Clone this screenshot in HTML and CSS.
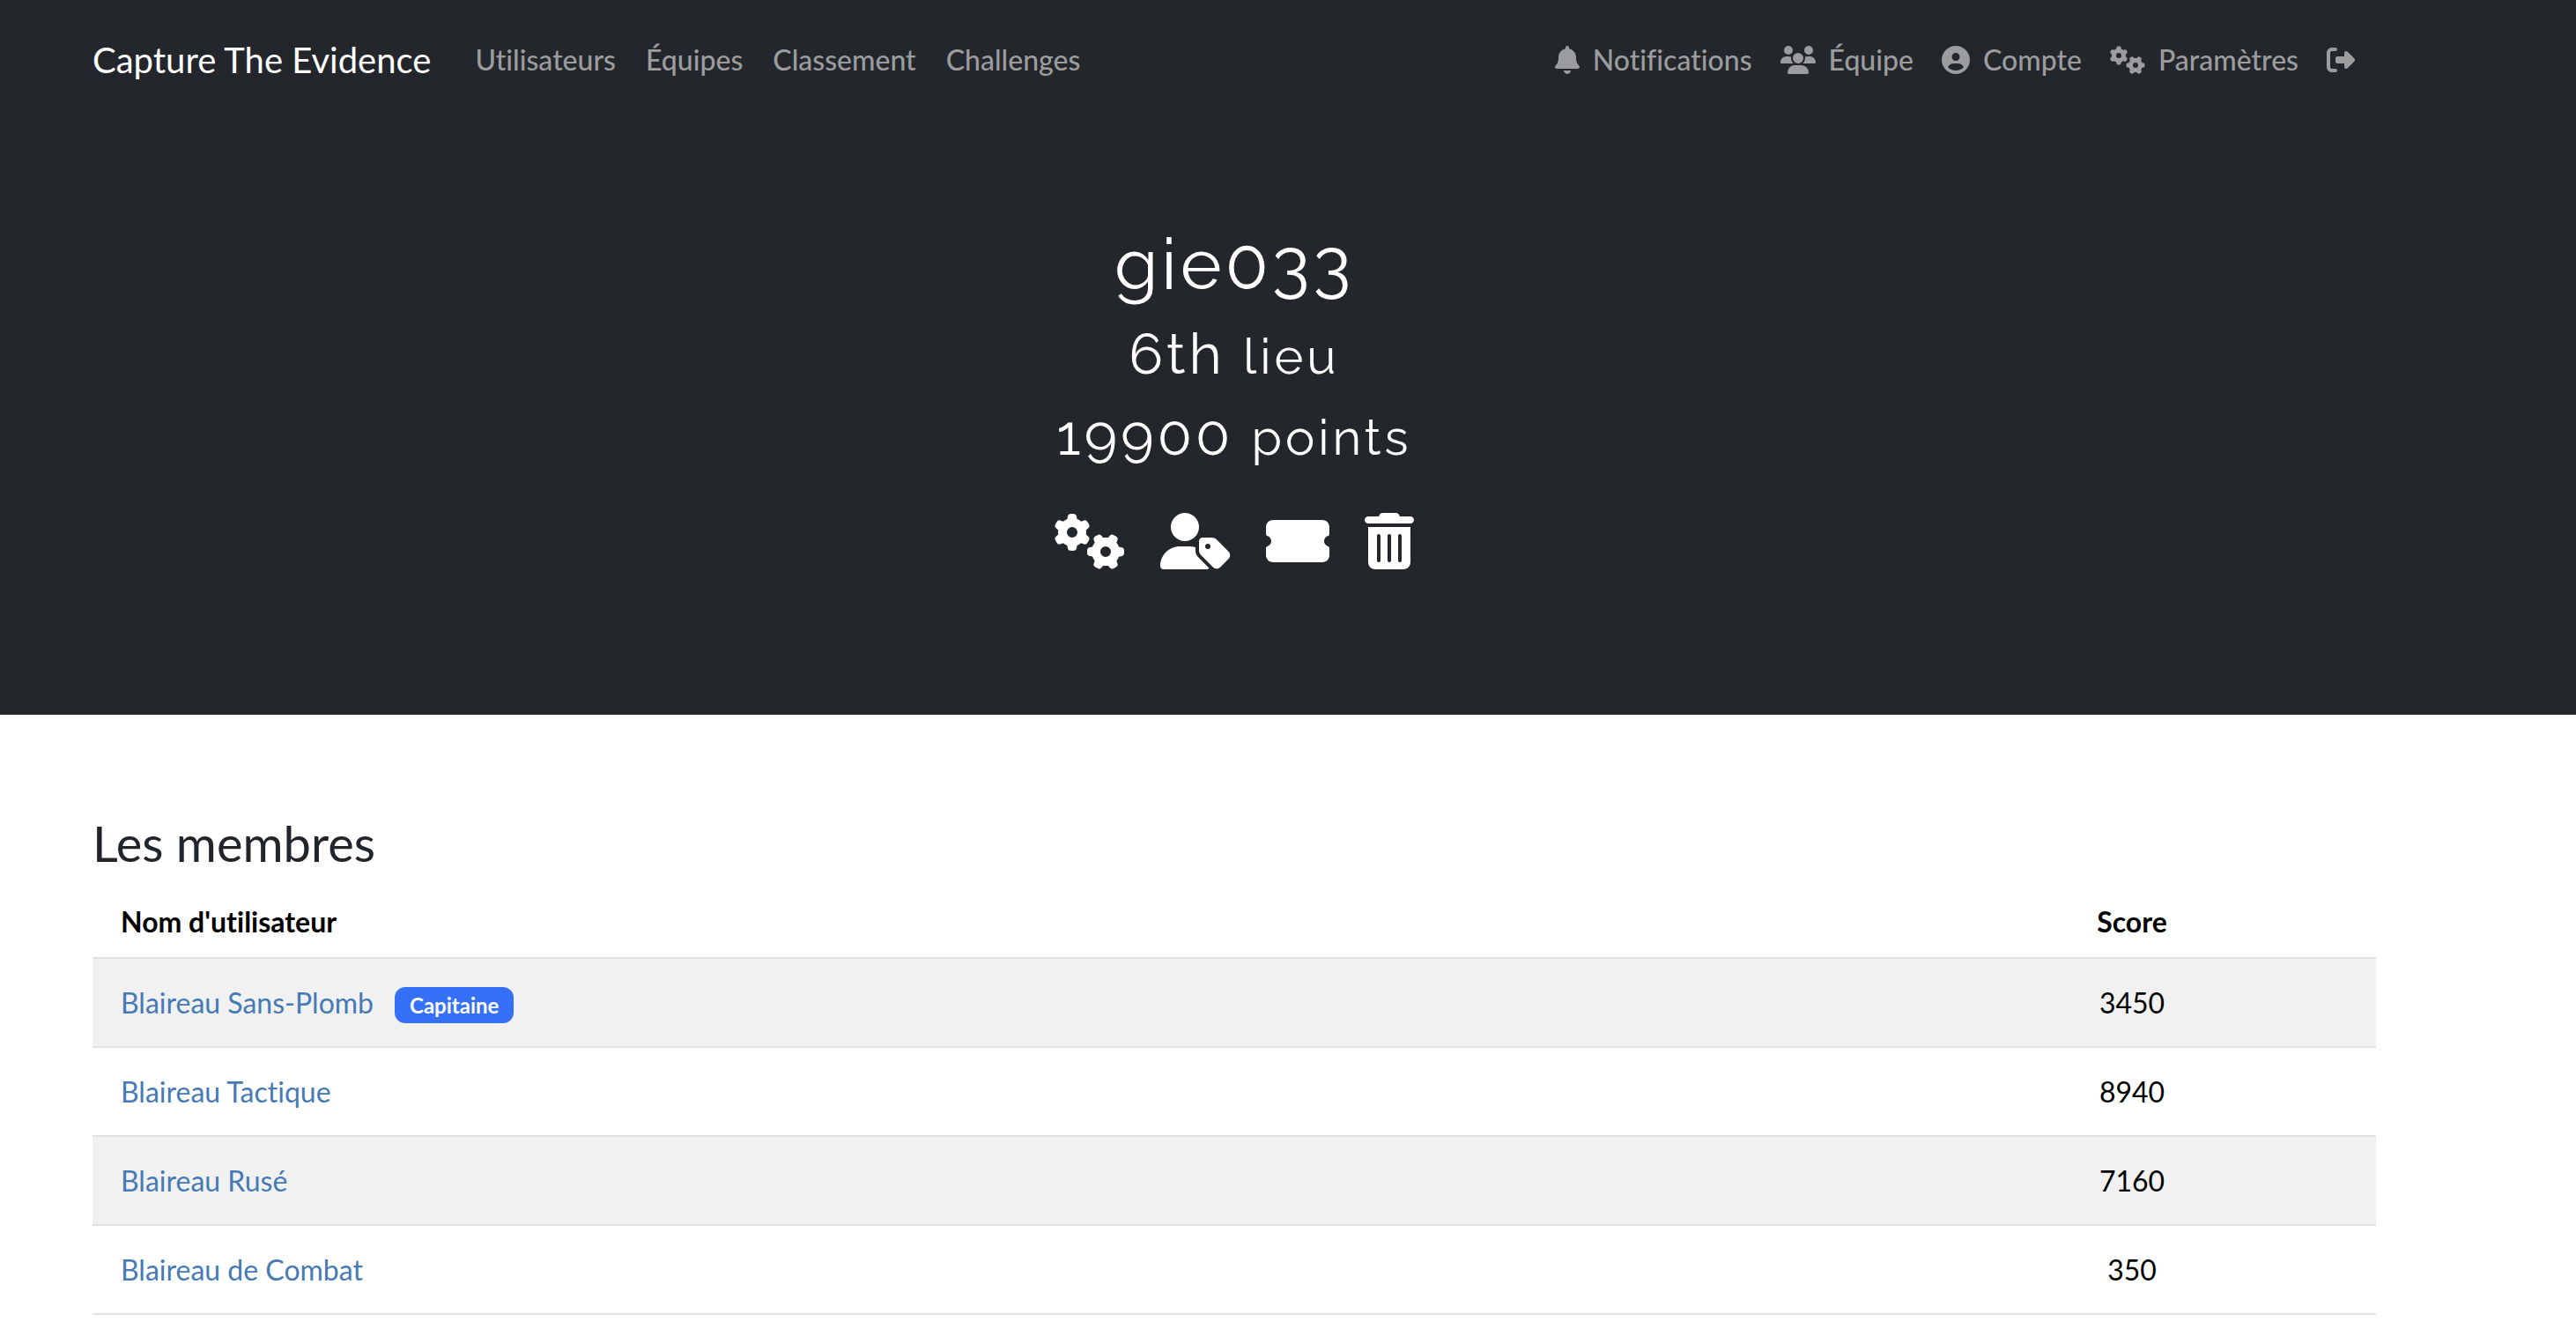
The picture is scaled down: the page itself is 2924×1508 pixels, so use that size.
FILE: index.html
```html
<!DOCTYPE html>
<html lang="fr">
<head>
  <meta charset="utf-8">
  <meta name="viewport" content="width=device-width, initial-scale=1">
  <title>Capture The Evidence</title>
  <link rel="stylesheet" href="styles.css">
</head>
<body>
  <svg class="sprite" aria-hidden="true">
    <symbol id="gears" viewBox="0 0 640 512"><path d="M308.5 135.3c7.1-6.3 9.9-16.2 6.2-25c-2.3-5.3-4.8-10.5-7.6-15.5L304 89.4c-3-5-6.3-9.9-9.8-14.6c-5.7-7.6-15.7-10.1-24.7-7.1l-28.2 9.3c-10.7-8.8-23-16-36.2-20.9L199 27.1c-1.9-9.3-9.1-16.7-18.5-17.8C173.9 8.4 167.2 8 160.4 8h-.7c-6.8 0-13.5 .4-20.1 1.2c-9.4 1.1-16.6 8.6-18.5 17.8L115 56.1c-13.3 5-25.5 12.1-36.2 20.9L50.5 67.8c-9-3-19-.5-24.7 7.1c-3.5 4.7-6.8 9.6-9.9 14.6l-3 5.3c-2.8 5-5.3 10.2-7.6 15.6c-3.7 8.7-.9 18.6 6.2 25l22.2 19.8C32.6 161.9 32 168.9 32 176s.6 14.1 1.7 20.9L11.5 216.7c-7.1 6.3-9.9 16.2-6.2 25c2.3 5.3 4.8 10.5 7.6 15.6l3 5.2c3 5.1 6.3 9.9 9.9 14.6c5.7 7.6 15.7 10.1 24.7 7.1l28.2-9.3c10.7 8.8 23 16 36.2 20.9l6.1 29.1c1.9 9.3 9.1 16.7 18.5 17.8c6.7 .8 13.5 1.2 20.4 1.2s13.7-.4 20.4-1.2c9.4-1.1 16.6-8.6 18.5-17.8l6.1-29.1c13.3-5 25.5-12.1 36.2-20.9l28.2 9.3c9 3 19 .5 24.7-7.1c3.5-4.7 6.8-9.5 9.8-14.6l3.1-5.4c2.8-5 5.3-10.2 7.6-15.5c3.7-8.7 .9-18.6-6.2-25l-22.2-19.8c1.1-6.8 1.7-13.8 1.7-20.9s-.6-14.1-1.7-20.9l22.2-19.8zM112 176a48 48 0 1 1 96 0 48 48 0 1 1 -96 0zM504.7 500.5c6.3 7.1 16.2 9.9 25 6.2c5.3-2.3 10.5-4.8 15.5-7.6l5.4-3.1c5-3 9.9-6.3 14.6-9.8c7.6-5.7 10.1-15.7 7.1-24.7l-9.3-28.2c8.8-10.7 16-23 20.9-36.2l29.1-6.1c9.3-1.9 16.7-9.1 17.8-18.5c.8-6.7 1.2-13.5 1.2-20.4s-.4-13.7-1.2-20.4c-1.1-9.4-8.6-16.6-17.8-18.5L583.9 307c-5-13.3-12.1-25.5-20.9-36.2l9.3-28.2c3-9 .5-19-7.1-24.7c-4.7-3.5-9.6-6.8-14.6-9.9l-5.3-3c-5-2.8-10.2-5.3-15.6-7.6c-8.7-3.7-18.6-.9-25 6.2l-19.8 22.2c-6.8-1.1-13.8-1.7-20.9-1.7s-14.1 .6-20.9 1.7l-19.8-22.2c-6.3-7.1-16.2-9.9-25-6.2c-5.3 2.3-10.5 4.8-15.6 7.6l-5.2 3c-5.1 3-9.9 6.3-14.6 9.9c-7.6 5.7-10.1 15.7-7.1 24.7l9.3 28.2c-8.8 10.7-16 23-20.9 36.2L315.1 313c-9.3 1.9-16.7 9.1-17.8 18.5c-.8 6.7-1.2 13.5-1.2 20.4s.4 13.7 1.2 20.4c1.1 9.4 8.6 16.6 17.8 18.5l29.1 6.1c5 13.3 12.1 25.5 20.9 36.2l-9.3 28.2c-3 9-.5 19 7.1 24.7c4.7 3.5 9.5 6.8 14.6 9.8l5.4 3.1c5 2.8 10.2 5.3 15.5 7.6c8.7 3.7 18.6 .9 25-6.2l19.8-22.2c6.8 1.1 13.8 1.7 20.9 1.7s14.1-.6 20.9-1.7l19.8 22.2zM464 304a48 48 0 1 1 0 96 48 48 0 1 1 0-96z"/></symbol>
  </svg>

  <header class="navbar">
    <nav class="container navbar-inner" aria-label="Navigation principale">
      <a class="brand" href="#">Capture The Evidence</a>
      <ul class="nav nav-start">
        <li><a class="nav-link" href="#">Utilisateurs</a></li>
        <li><a class="nav-link" href="#">Équipes</a></li>
        <li><a class="nav-link" href="#">Classement</a></li>
        <li><a class="nav-link" href="#">Challenges</a></li>
      </ul>
      <ul class="nav nav-end">
        <li><a class="nav-link" href="#"><svg class="icon" viewBox="0 0 448 512" aria-hidden="true"><path d="M224 0c-17.7 0-32 14.3-32 32V51.2C119 66 64 130.6 64 208v18.8c0 47-17.3 92.4-48.5 127.6l-7.4 8.3c-8.4 9.4-10.4 22.9-5.3 34.4S19.4 416 32 416H416c12.6 0 24-7.4 29.2-18.9s3.1-25-5.3-34.4l-7.4-8.3C401.3 319.2 384 273.9 384 226.8V208c0-77.4-55-142-128-156.8V32c0-17.7-14.3-32-32-32zm45.3 493.3c12-12 18.7-28.3 18.7-45.3H224 160c0 17 6.7 33.3 18.7 45.3s28.3 18.7 45.3 18.7s33.3-6.7 45.3-18.7z"/></svg>Notifications</a></li>
        <li><a class="nav-link" href="#"><svg class="icon" viewBox="0 0 640 512" aria-hidden="true"><path d="M144 0a80 80 0 1 1 0 160A80 80 0 1 1 144 0zM512 0a80 80 0 1 1 0 160A80 80 0 1 1 512 0zM0 298.7C0 239.8 47.8 192 106.7 192h42.7c15.9 0 31 3.5 44.6 9.7c-1.3 7.2-1.9 14.7-1.9 22.3c0 38.2 16.8 72.5 43.3 96c-.2 0-.4 0-.7 0H21.3C9.6 320 0 310.4 0 298.7zM405.3 320c-.2 0-.4 0-.7 0c26.6-23.5 43.3-57.8 43.3-96c0-7.6-.7-15-1.9-22.3c13.6-6.3 28.7-9.7 44.6-9.7h42.7C592.2 192 640 239.8 640 298.7c0 11.8-9.6 21.3-21.3 21.3H405.3zM224 224a96 96 0 1 1 192 0 96 96 0 1 1 -192 0zM128 485.3C128 411.7 187.7 352 261.3 352H378.7C452.3 352 512 411.7 512 485.3c0 14.7-11.9 26.7-26.7 26.7H154.7c-14.7 0-26.7-11.9-26.7-26.7z"/></svg>Équipe</a></li>
        <li><a class="nav-link" href="#"><svg class="icon" viewBox="0 0 512 512" aria-hidden="true"><path d="M399 384.2C376.9 345.8 335.4 320 288 320H224c-47.4 0-88.9 25.8-111 64.2c35.2 39.2 86.2 63.8 143 63.8s107.8-24.7 143-63.8zM0 256a256 256 0 1 1 512 0A256 256 0 1 1 0 256zm256 16a72 72 0 1 0 0-144 72 72 0 1 0 0 144z"/></svg>Compte</a></li>
        <li><a class="nav-link" href="#"><svg class="icon" viewBox="0 0 640 512" aria-hidden="true"><use href="#gears"/></svg>Paramètres</a></li>
        <li><a class="nav-link" href="#" aria-label="Déconnexion"><svg class="icon" viewBox="0 0 512 512" aria-hidden="true"><path d="M377.9 105.9L500.7 228.7c7.2 7.2 11.3 17.1 11.3 27.3s-4.1 20.1-11.3 27.3L377.9 406.1c-6.4 6.4-15 9.9-24 9.9c-18.7 0-33.9-15.2-33.9-33.9l0-62.1-128 0c-17.7 0-32-14.3-32-32l0-64c0-17.7 14.3-32 32-32l128 0 0-62.1c0-18.7 15.2-33.9 33.9-33.9c9 0 17.6 3.6 24 9.9zM160 96L96 96c-17.7 0-32 14.3-32 32l0 256c0 17.7 14.3 32 32 32l64 0c17.7 0 32 14.3 32 32s-14.3 32-32 32l-64 0c-53 0-96-43-96-96L0 128C0 75 43 32 96 32l64 0c17.7 0 32 14.3 32 32s-14.3 32-32 32z"/></svg></a></li>
      </ul>
    </nav>
  </header>

  <main>
    <section class="hero">
      <div class="container hero-inner">
        <h1 class="team-name">gie033</h1>
        <h2 class="team-stat">6th <small>lieu</small></h2>
        <h2 class="team-stat">19900 <small>points</small></h2>
        <div class="team-actions">
          <button type="button" class="action" aria-label="Modifier l'équipe"><svg class="icon-lg" viewBox="0 0 640 512" aria-hidden="true"><use href="#gears"/></svg></button>
          <button type="button" class="action" aria-label="Choisir le capitaine"><svg class="icon-lg" viewBox="0 0 640 512" aria-hidden="true"><path d="M224 256A128 128 0 1 0 224 0a128 128 0 1 0 0 256zm-45.7 48C79.8 304 0 383.8 0 482.3C0 498.7 13.3 512 29.7 512H418.3c10 0 18.8-4.9 24.2-12.5l-99.2-99.2c-14.9-14.9-23.3-35.1-23.3-56.1v-33c-15.9-4.7-32.8-7.2-50.3-7.2H178.3zM384 224c-17.7 0-32 14.3-32 32v82.7c0 17 6.7 33.3 18.7 45.3L478.1 491.3c18.7 18.7 49.1 18.7 67.9 0l73.4-73.4c18.7-18.7 18.7-49.1 0-67.9L512 242.7c-12-12-28.3-18.7-45.3-18.7H384zm24 80a24 24 0 1 1 48 0 24 24 0 1 1 -48 0z"/></svg></button>
          <button type="button" class="action" aria-label="Inviter des membres"><svg class="icon-lg" viewBox="0 0 576 512" aria-hidden="true"><path d="M0 128C0 92.7 28.7 64 64 64H512c35.3 0 64 28.7 64 64v64c0 8.8-7.4 15.7-15.7 18.6C541.5 217.1 528 235 528 256s13.5 38.9 32.3 45.4c8.3 2.9 15.7 9.8 15.7 18.6v64c0 35.3-28.7 64-64 64H64c-35.3 0-64-28.7-64-64V320c0-8.8 7.4-15.7 15.7-18.6C34.5 294.9 48 277 48 256s-13.5-38.9-32.3-45.4C7.4 207.7 0 200.8 0 192V128z"/></svg></button>
          <button type="button" class="action" aria-label="Dissoudre l'équipe"><svg class="icon-lg" viewBox="0 0 448 512" aria-hidden="true"><path d="M135.2 17.7C140.6 6.8 151.7 0 163.8 0H284.2c12.1 0 23.2 6.8 28.6 17.7L320 32h96c17.7 0 32 14.3 32 32s-14.3 32-32 32H32C14.3 96 0 81.7 0 64S14.3 32 32 32h96l7.2-14.3zM32 128H416V448c0 35.3-28.7 64-64 64H96c-35.3 0-64-28.7-64-64V128zm96 64c-8.8 0-16 7.2-16 16V432c0 8.8 7.2 16 16 16s16-7.2 16-16V208c0-8.8-7.2-16-16-16zm96 0c-8.8 0-16 7.2-16 16V432c0 8.8 7.2 16 16 16s16-7.2 16-16V208c0-8.8-7.2-16-16-16zm96 0c-8.8 0-16 7.2-16 16V432c0 8.8 7.2 16 16 16s16-7.2 16-16V208c0-8.8-7.2-16-16-16z"/></svg></button>
        </div>
      </div>
    </section>

    <section class="members">
      <div class="container">
        <h3 class="section-title" id="members-title">Les membres</h3>
        <table class="table" aria-labelledby="members-title">
          <thead>
            <tr><th scope="col">Nom d'utilisateur</th><th scope="col" class="score">Score</th></tr>
          </thead>
          <tbody>
            <tr><td><a class="member" href="#">Blaireau Sans-Plomb</a><span class="badge">Capitaine</span></td><td class="score">3450</td></tr>
            <tr><td><a class="member" href="#">Blaireau Tactique</a></td><td class="score">8940</td></tr>
            <tr><td><a class="member" href="#">Blaireau Rusé</a></td><td class="score">7160</td></tr>
            <tr><td><a class="member" href="#">Blaireau de Combat</a></td><td class="score">350</td></tr>
          </tbody>
        </table>
      </div>
    </section>
  </main>
</body>
</html>
```
FILE: styles.css
```css
* {
  box-sizing: border-box;
}

body {
  margin: 0;
  background: #fff;
  color: #212529;
  font-family: Lato, "Noto Sans", sans-serif;
  font-size: 32px;
  font-variant-ligatures: none;
  line-height: 48px;
}

a {
  text-decoration: none;
}

.sprite {
  display: none;
}

.navbar,
.hero,
.members {
  padding-right: 122px;
}

.container {
  max-width: 2640px;
  margin: 0 auto;
  padding: 0 24px;
}

/* Top bar */
.navbar {
  padding-top: 32px;
  padding-bottom: 32px;
  background: #23262b;
}

.navbar-inner {
  display: flex;
  align-items: center;
}

.brand {
  margin-right: 34px;
  color: #fff;
  font-size: 40px;
}

.nav {
  display: flex;
  margin: 0;
  padding: 0;
  list-style: none;
}

.nav-start {
  gap: 2px;
}

.nav-end {
  margin-left: auto;
  margin-right: 8px;
}

.nav-link {
  display: flex;
  align-items: center;
  gap: 15px;
  min-height: 72px;
  padding: 0 16px;
  color: #9b9c9e;
  font-weight: 500;
}

.icon {
  height: 32px;
  fill: currentColor;
}

/* Team banner */
.hero {
  padding-top: 116px;
  padding-bottom: 165px;
  background: #23262b;
  color: #fff;
}

.hero-inner {
  text-align: center;
}

.team-name,
.team-stat {
  margin: 0 0 16px;
  font-family: Raleway, Lato, sans-serif;
  font-weight: 400;
  font-variant-numeric: oldstyle-nums;
  letter-spacing: 4px;
}

.team-name {
  font-size: 80px;
  line-height: 96px;
}

.team-stat {
  font-size: 64px;
  line-height: 76px;
}

.team-stat small {
  font-size: 56px;
  line-height: 56px;
}

.team-actions {
  display: flex;
  justify-content: center;
  gap: 40px;
  padding-top: 34px;
}

.action {
  padding: 0;
  border: 0;
  background: none;
  color: #fff;
  cursor: pointer;
}

.icon-lg {
  display: block;
  height: 64px;
  fill: currentColor;
}

/* Members list */
.members {
  padding-top: 112px;
}

.section-title {
  margin: 0 0 16px;
  font-size: 56px;
  font-weight: 400;
  line-height: 67px;
}

.table {
  width: 100%;
  border-collapse: separate;
  border-spacing: 0;
  color: #000;
}

.table th,
.table td {
  border-bottom: 2px solid #dee2e6;
  text-align: left;
}

.table th {
  padding: 16px 32px;
  font-weight: 700;
}

.table td {
  height: 101px;
  padding: 0 32px;
}

.table tbody tr:nth-child(odd) {
  background: #f1f1f1;
}

.table .score {
  width: 554px;
  text-align: center;
}

.member {
  color: #467ab4;
}

.badge {
  display: inline-block;
  margin-left: 24px;
  padding: 8px 17px;
  border-radius: 12px;
  background: #3670f6;
  color: #fff;
  font-size: 24px;
  font-weight: 700;
  line-height: 25px;
}
```
